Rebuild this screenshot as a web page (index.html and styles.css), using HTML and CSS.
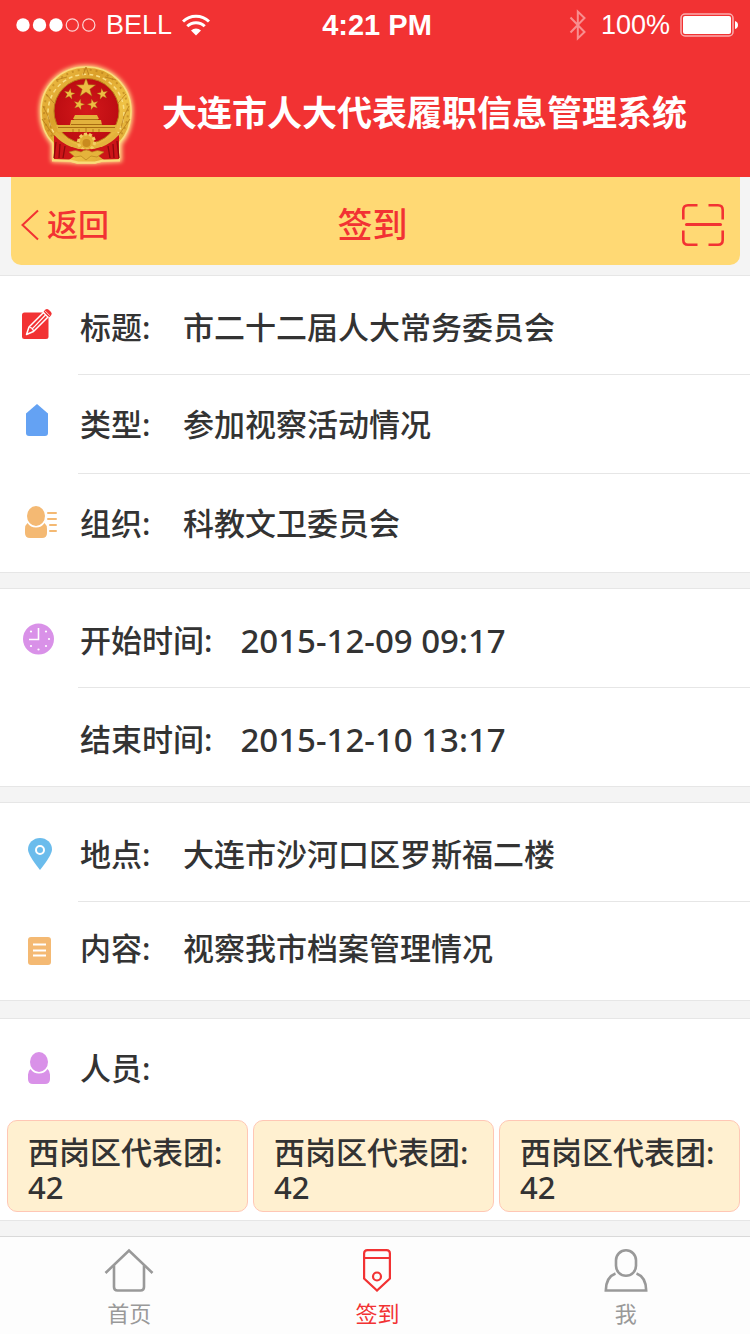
FILE: index.html
```html
<!DOCTYPE html>
<html lang="zh-CN">
<head>
<meta charset="utf-8">
<meta name="viewport" content="width=device-width">
<title>签到</title>
<link rel="stylesheet" href="styles.css">
</head>
<body>
<header class="header">
  <div class="status">
    <div class="status-left">
      <svg class="signal" viewBox="0 0 80 16" width="80" height="16"><g fill="#fff"><circle cx="7" cy="8" r="6.7"/><circle cx="23.5" cy="8" r="6.7"/><circle cx="40" cy="8" r="6.7"/></g><g fill="none" stroke="#fff" stroke-opacity=".8" stroke-width="1.2"><circle cx="56.3" cy="8" r="6.1"/><circle cx="72.8" cy="8" r="6.1"/></g></svg>
      <span>BELL</span>
      <svg viewBox="0 0 28 22" width="28" height="22"><g fill="none" stroke="#fff" stroke-width="3"><path d="M1 7.500a18.500 18.500 0 0 1 26 0"/><path d="M5.300 12.300a12.300 12.300 0 0 1 17.400 0"/></g><path d="M9 16.500a7.200 7.200 0 0 1 10 0L14 21.500z" fill="#fff"/></svg>
    </div>
    <strong class="clock">4:21 PM</strong>
    <div class="status-right">
      <svg viewBox="0 0 18 32" width="18" height="32"><path d="M1.500 8.500l14 14.500-6.700 6.500V2.500l6.700 6.500-14 14.500" fill="none" stroke="#fff" stroke-opacity=".45" stroke-width="2"/></svg>
      <span>100%</span>
      <svg viewBox="0 0 58 24" width="58" height="24"><rect x="1" y="1" width="52" height="22" rx="4" fill="none" stroke="#fff" stroke-opacity=".6" stroke-width="1.500"/><rect x="3" y="3" width="48" height="18" rx="2" fill="#fff"/><path d="M55 8q3 1 3 4t-3 4z" fill="#fff"/></svg>
    </div>
  </div>
  <div class="brand">
    <svg class="emblem" viewBox="30 54 112 118" width="112" height="118" role="img" aria-label="国徽">
      <defs>
        <linearGradient id="gold" x1="0" y1="0" x2="1" y2="1"><stop offset="0" stop-color="#f2c44c"/><stop offset=".35" stop-color="#dba02a"/><stop offset=".65" stop-color="#efc245"/><stop offset="1" stop-color="#d3982a"/></linearGradient>
        <radialGradient id="disc"><stop offset="0" stop-color="#d4181b"/><stop offset="1" stop-color="#bd0d12"/></radialGradient>
        <filter id="glow" x="-20%" y="-20%" width="140%" height="140%"><feGaussianBlur stdDeviation="2"/></filter>
        <path id="star" d="M0-10 2.400-3.200 9.500-3.100 3.800 1.200 5.900 8.100 0 4-5.900 8.100-3.800 1.200-9.500-3.100-2.400-3.200z"/>
      </defs>
      <path d="M86 65c26 0 46 20 46 46 0 14-4 24-11 32v17l-18 1-9 1H78l-8-1-18-1v-17c-7-8-12-18-12-32 0-26 20-46 46-46z" fill="#ffe08a" stroke="#ffe08a" stroke-width="2" filter="url(#glow)"/>
      <path d="M86 66c25 0 45 19 45 44 0 14-5 25-12 32v17l-17 1-7 2H77l-7-2-17-1v-17c-7-7-12-18-12-32 0-25 20-44 45-44z" fill="url(#gold)" stroke="#f9dc7a" stroke-width="1.500"/>
      <g fill="none">
        <path d="M56 140A42 42 0 1 1 116 140" stroke="#b67c1b" stroke-width="2" stroke-dasharray="2 4" opacity=".6"/>
        <path d="M58 137A38 38 0 1 1 114 137" stroke="#f9de83" stroke-width="1.500" stroke-dasharray="4 3"/>
        <path d="M43 105q6 9 8 22M129 105q-6 9-8 22M46 93l8 9M126 93l-8 9M56 79l11-3M116 79l-11-3M83 74l3-8 3 8M42 118l12 17M130 118l-12 17" stroke="#b67c1b" stroke-width="1" opacity=".8"/>
      </g>
      <circle cx="86.500" cy="110" r="32.500" fill="url(#disc)" stroke="#b77a18"/>
      <g fill="#edbd43" stroke="#a56c12" stroke-width=".5">
        <use href="#star" transform="translate(86 87)"/>
        <use href="#star" transform="translate(69.500 93) rotate(10) scale(.57)"/>
        <use href="#star" transform="translate(102.500 93) rotate(-10) scale(.57)"/>
        <use href="#star" transform="translate(79 103.500) rotate(15) scale(.57)"/>
        <use href="#star" transform="translate(93 103.500) rotate(-15) scale(.57)"/>
      </g>
      <path d="M75 114h22l2 4H73zM71 119h30l1 5H70zM56 124h61l-2 7H58z" fill="#e3b23c"/>
      <path d="M74 118.500h24M71 123.500h31M58 126.500h57" stroke="#a96c12" stroke-width="1" fill="none"/>
      <path d="M73 128v3M79 128v3M86 127v4M93 128v3M99 128v3" stroke="#b67c1b" stroke-width="1"/>
      <path d="M54 134q8 5 16 8 8 5 16.500 5t16.500-5q8-3 16-8v24l-15 1-8-6q-10 3-19 0l-8 6-15-1z" fill="#cc1518"/>
      <path d="M55 132q8 9 17 12 14 6 29 0 9-3 17-12" fill="none" stroke="#e3b23c" stroke-width="4"/>
      <path d="M56 141l-2 16M60 143l-1 14M65 145l-2 12M108 145l2 12M113 143l1 14M117 140l2 17" stroke="#8d090c" stroke-width="1.300"/>
      <circle cx="86.500" cy="141" r="8" fill="#e3ae35" stroke="#f2cd61" stroke-width="3" stroke-dasharray="3 2"/>
      <circle cx="86.500" cy="142" r="4" fill="#c98a1e"/>
      <path d="M66 145q20 7 41 0v4q-20 5-41 0z" fill="#cc1518"/>
      <path d="M69 151q7-3 12 0 5-4 11 0 5-3 12 0l-7 5-6-1-5 4-5-4-6 1z" fill="#e5b33b" stroke="#b27a17" stroke-width=".6"/>
      <path d="M52 159.500h18l8 2h17l8-2h17" fill="none" stroke="#f9dc7a" stroke-width="2"/>
    </svg>
    <h1 class="brand-title">大连市人大代表履职信息管理系统</h1>
  </div>
</header>

<div class="titlebar">
  <a class="back" href="#"><svg viewBox="0 0 18 32" width="18" height="32"><path d="M17 1.500L1.500 16 17 30.500" fill="none" stroke="#f23233" stroke-width="2"/></svg>返回</a>
  <h2 class="title">签到</h2>
  <button class="scan" type="button" aria-label="扫一扫"><svg viewBox="0 0 42 42" width="42" height="42"><g fill="none" stroke="#f23233" stroke-width="2.600"><path d="M1.300 15.500V6q0-4.700 4.700-4.700h9.500M26.500 1.300H36q4.700 0 4.700 4.700v9.500M40.700 26.500V36q0 4.700-4.700 4.700h-9.500M15.500 40.700H6q-4.700 0-4.700-4.700v-9.500"/><path d="M4.500 20.500h34" stroke-width="3" stroke-linecap="round"/></g></svg></button>
</div>

<main class="main">
  <dl class="section">
    <div class="row row-low">
      <svg class="icon" viewBox="0 0 42 42"><rect x="4" y="8.500" width="26.500" height="26.500" rx="2.500" fill="#f23233"/><path d="M8.500 30.500l2.500-7.500L25.500 8.500l4.500 4.500-14.500 14.500z" fill="#f23233" stroke="#fff" stroke-width="1.500" stroke-linejoin="round"/><path d="M11.500 23.300q3.500.3 4 4M13.800 25.300L27.500 11" fill="none" stroke="#fff" stroke-width="1.200"/><path d="M25.600 7.400l1.600-1.600q1.800-1.500 3.500 0l2.300 2.300q1.500 1.700 0 3.500l-1.700 1.600z" fill="#f23233"/><path d="M27 6.800l5 5" stroke="#fff" stroke-width=".8"/></svg>
      <div class="field"><dt>标题:</dt><dd>市二十二届人大常务委员会</dd></div>
    </div>
    <div class="row">
      <svg class="icon" viewBox="0 0 42 42"><path d="M8 10.500L19 1l11 9.500V30q0 3-3 3H11q-3 0-3-3z" fill="#64a2f3"/></svg>
      <div class="field"><dt>类型:</dt><dd>参加视察活动情况</dd></div>
    </div>
    <div class="row">
      <svg class="icon" viewBox="0 0 42 42"><g fill="#f4b973"><path d="M9.500 21q-2.500 2-2.500 6v4q0 5 5 5h12q5 0 5-5v-4q0-4-2.500-6-3 4.500-8.500 4.500T9.500 21z"/><ellipse cx="18" cy="14" rx="9" ry="10"/></g><path d="M30 11h8M30 17h8M32 23h6M32 29h6" stroke="#f4b973" stroke-width="2" stroke-linecap="round"/></svg>
      <div class="field"><dt>组织:</dt><dd>科教文卫委员会</dd></div>
    </div>
  </dl>

  <dl class="section">
    <div class="row row-low">
      <svg class="icon" viewBox="0 0 42 42"><circle cx="20.500" cy="22" r="15.500" fill="#d991e8"/><path d="M20.500 11v11.500H11" fill="none" stroke="#fff" stroke-width="1.600"/><g fill="#fff"><circle cx="13" cy="14.500" r="1.100"/><circle cx="28" cy="14.500" r="1.100"/><circle cx="31" cy="22" r="1.100"/><circle cx="28" cy="29" r="1.100"/><circle cx="20.500" cy="32.500" r="1.100"/><circle cx="13" cy="29" r="1.100"/></g></svg>
      <div class="field"><dt>开始时间:</dt><dd class="date">2015-12-09 09:17</dd></div>
    </div>
    <div class="row row-low">
      <span class="icon"></span>
      <div class="field"><dt>结束时间:</dt><dd class="date">2015-12-10 13:17</dd></div>
    </div>
  </dl>

  <dl class="section">
    <div class="row row-low">
      <svg class="icon" viewBox="0 0 42 42"><path d="M22 39Q10 24 10 18.500a12 11.500 0 0 1 24 0Q34 24 22 39z" fill="#6bbcec"/><circle cx="22" cy="19" r="4" fill="none" stroke="#fff" stroke-width="2"/></svg>
      <div class="field"><dt>地点:</dt><dd>大连市沙河口区罗斯福二楼</dd></div>
    </div>
    <div class="row row-high">
      <svg class="icon" viewBox="0 0 42 42"><rect x="10" y="7" width="23" height="28" rx="3" fill="#f4b973"/><path d="M15 14.500h13M15 20.500h13M15 25.500h13" stroke="#fff" stroke-width="1.800"/></svg>
      <div class="field"><dt>内容:</dt><dd>视察我市档案管理情况</dd></div>
    </div>
  </dl>

  <section class="section people">
    <div class="row">
      <svg class="icon" viewBox="0 0 42 42"><g fill="#d991e8"><path d="M12.500 22q-2.500 2-2.500 5.500V32q0 5 5 5h12q5 0 5-5v-4.500q0-3.500-2.500-5.500-3 4.500-8.500 4.500T12.500 22z"/><ellipse cx="21" cy="15" rx="9" ry="10"/></g></svg>
      <h3 class="field">人员:</h3>
    </div>
    <ul class="cards">
      <li class="card">西岗区代表团:<br>42</li>
      <li class="card">西岗区代表团:<br>42</li>
      <li class="card">西岗区代表团:<br>42</li>
    </ul>
  </section>
</main>

<nav class="tabs">
  <a class="tab" href="#"><svg viewBox="0 0 50 44" width="50" height="44"><g fill="none" stroke="#999" stroke-width="2.600"><path d="M1.500 25L25 2.500 48.500 25"/><path d="M10 17.500V39q0 3.500 3.500 3.500h23q3.500 0 3.500-3.500V17.500"/></g></svg>首页</a>
  <a class="tab active" href="#" aria-current="page"><svg viewBox="0 0 50 44" width="50" height="44"><g fill="none" stroke="#f23233" stroke-width="2.200"><path d="M12.100 30.500V5.500q0-3.400 3.400-3.400h19q3.400 0 3.400 3.400v25L25 42.500zM12 10h26"/><circle cx="25" cy="28.500" r="4"/></g></svg>签到</a>
  <a class="tab" href="#"><svg viewBox="0 0 50 44" width="50" height="44"><g fill="none" stroke="#999" stroke-width="2.600"><rect x="15" y="2.300" width="20" height="25.500" rx="10"/><path d="M14.500 25.500Q5 29 4.800 42.500h40.400Q45 29 35.500 25.500"/></g></svg>我</a>
</nav>
</body>
</html>
```

FILE: styles.css
```css
* {
  box-sizing: border-box;
}

body {
  margin: 0;
  min-height: 100vh;
  display: flex;
  flex-direction: column;
  background: #f4f4f4;
  color: #333;
  font-family: "Noto Sans", "Noto Sans CJK SC", sans-serif;
  font-size: 31px;
  font-weight: 500;
  line-height: 35px;
}

h1, h2, h3, dl, dd, ul {
  margin: 0;
  padding: 0;
  font-weight: inherit;
}

a {
  color: inherit;
  text-decoration: none;
}

svg {
  display: block;
  flex: none;
}

.header {
  background: #f23233;
  color: #fff;
}

.status {
  display: grid;
  grid-template-columns: 1fr auto 1fr;
  align-items: center;
  height: 50px;
  padding: 0 12px 0 16px;
  font: 27px/30px "Liberation Sans", Arial, sans-serif;
}

.status-left,
.status-right {
  display: flex;
  align-items: center;
  gap: 10px;
}

.status-right {
  justify-content: flex-end;
}

.status-right svg:first-child {
  margin-right: 4px;
}

.clock {
  font-size: 29px;
}

.brand {
  display: flex;
  align-items: center;
  gap: 20px;
  height: 127px;
  padding-left: 30px;
}

.brand-title {
  padding-bottom: 6px;
  font-family: "Noto Sans CJK SC", sans-serif;
  font-size: 35px;
  font-weight: 700;
  line-height: 48px;
}

.titlebar {
  display: grid;
  grid-template-columns: 1fr auto 1fr;
  align-items: center;
  height: 88px;
  margin: 0 10px 10px 11px;
  padding: 7px 16px 0 10px;
  border-radius: 0 0 10px 10px;
  background: #ffd974;
  color: #f23233;
}

.back {
  display: flex;
  align-items: center;
  gap: 8px;
}

.title {
  font-size: 35px;
  line-height: 40px;
}

.scan {
  justify-self: end;
  padding: 0;
  border: 0;
  background: none;
  cursor: pointer;
}

.main {
  display: flex;
  flex-direction: column;
  gap: 15px;
  flex: 1;
}

.section {
  border: solid #e6e6e6;
  border-width: 1px 0;
  background: #fff;
}

.row {
  display: flex;
  align-items: center;
  padding-left: 18px;
}

.icon {
  width: 42px;
  height: 42px;
  margin-right: 18px;
}

.field {
  display: flex;
  flex: 1;
  align-items: center;
  gap: 28px;
  min-height: 98px;
  padding-left: 2px;
}

.field dt {
  min-width: 75px;
}

.row-low .field {
  padding-top: 4px;
}

.row-high .field {
  padding-bottom: 6px;
}

.row + .row .field {
  border-top: 1px solid #e6e6e6;
  min-height: 99px;
}

.date {
  font-size: 33px;
}

.people {
  margin-top: 2px;
}

.people h3 {
  font-size: inherit;
}

.cards {
  display: grid;
  grid-template-columns: repeat(3, 1fr);
  gap: 5px;
  padding: 3px 10px 8px 7px;
  list-style: none;
}

.card {
  padding: 14px 10px 6px 20px;
  border: 1px solid #ffc7b5;
  border-radius: 10px;
  background: #fff0d0;
}

.tabs {
  display: grid;
  grid-template-columns: repeat(3, 1fr);
  margin-top: 15px;
  padding: 11px 0 6px 5px;
  border-top: 1px solid #d9d9d9;
  background: #fdfdfd;
  color: #999;
  font-size: 22px;
  font-weight: 400;
  line-height: 30px;
}

.tab {
  display: flex;
  flex-direction: column;
  align-items: center;
  gap: 6px;
}

.active {
  color: #f23233;
}
```
